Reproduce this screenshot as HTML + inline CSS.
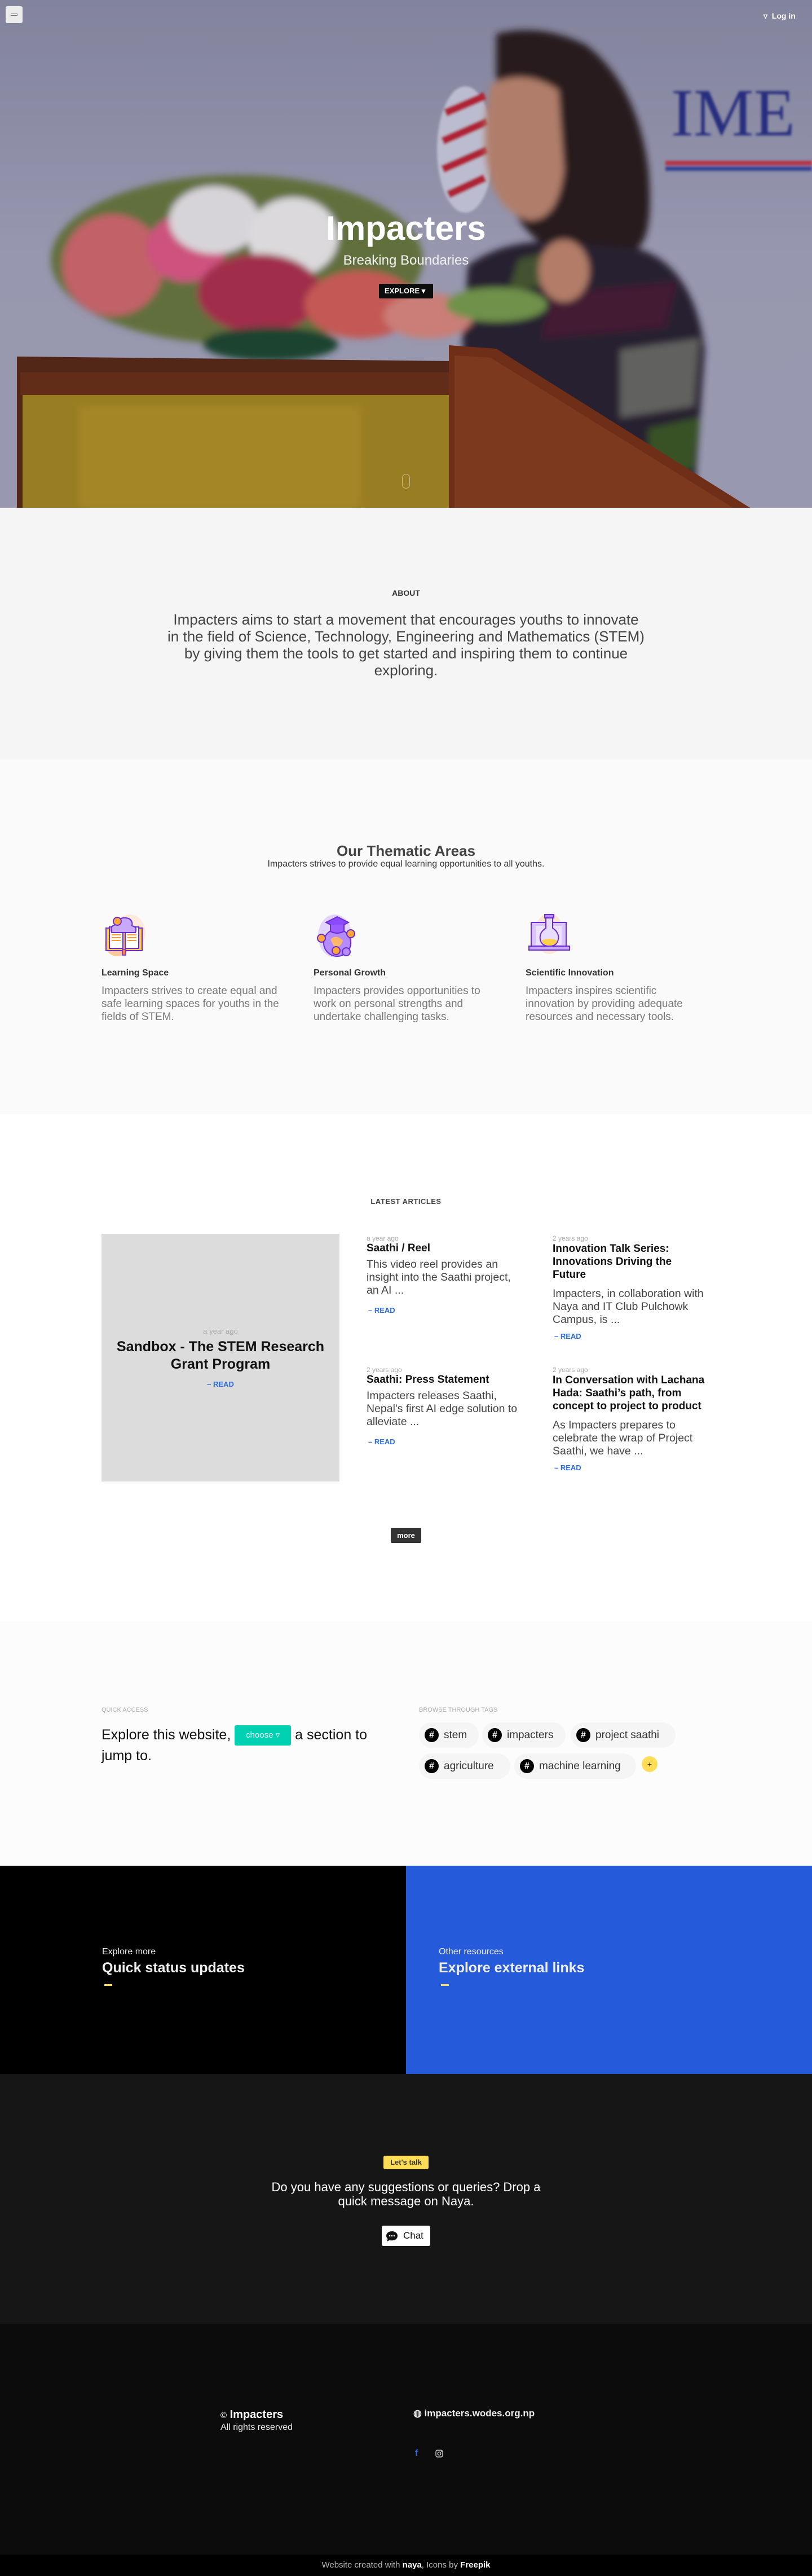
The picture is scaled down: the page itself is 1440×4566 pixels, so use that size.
<!DOCTYPE html>
<html><head><meta charset="utf-8">
<style>
*{margin:0;padding:0;box-sizing:border-box}
body{width:1440px;height:4566px;position:relative;font-family:"Liberation Sans",sans-serif;background:#fff;overflow:hidden}
.a{position:absolute}
.c{text-align:center}
.nw{white-space:nowrap}
</style></head><body>

<!-- HERO -->
<svg class="a" style="left:0;top:0" width="1440" height="900" viewBox="0 0 1440 900">
<defs><filter id="b" x="-20%" y="-20%" width="140%" height="140%"><feGaussianBlur stdDeviation="6"/></filter>
<filter id="b2"><feGaussianBlur stdDeviation="2"/></filter>
<linearGradient id="bg" x1="0" y1="0" x2="0" y2="1"><stop offset="0" stop-color="#8f90aa"/><stop offset=".5" stop-color="#a6a6bf"/><stop offset="1" stop-color="#a8a8c0"/></linearGradient></defs>
<rect width="1440" height="900" fill="url(#bg)"/>
<g filter="url(#b2)">
<ellipse cx="825" cy="265" rx="50" ry="112" fill="#cfd0e2"/>
<path d="M790 200 L860 170 M785 250 L865 215 M785 300 L865 265 M795 345 L860 315" stroke="#c02838" stroke-width="14"/>
<text x="1190" y="240" font-family="Liberation Serif" font-size="120" fill="#2a3088">IME B</text>
<rect x="1180" y="285" width="260" height="8" fill="#c83848"/><rect x="1180" y="295" width="260" height="8" fill="#3a48a0"/>
</g>
<g filter="url(#b)">
<path d="M880 60 Q960 40 1040 80 Q1130 150 1150 300 Q1160 420 1130 440 L1000 450 Q920 430 880 300Z" fill="#2a1e1c"/>
<path d="M870 150 Q930 120 990 160 L1000 300 Q990 390 940 390 Q890 380 870 320 Q850 250 870 150Z" fill="#c28a72"/>
<path d="M830 470 Q900 420 1000 430 L1130 440 Q1230 470 1250 620 L1230 900 L840 900 L820 600Z" fill="#2c2430"/>
<path d="M980 520 L1200 500 L1180 580 L960 600Z" fill="#4a1c34"/>
<path d="M1100 620 L1240 600 L1230 720 L1100 740Z" fill="#6a6a66"/>
<path d="M1150 760 L1240 740 L1230 830 L1150 850Z" fill="#3e5a28"/>
<path d="M920 460 L1000 440 L990 500 L900 520Z" fill="#4a5a30"/>
<ellipse cx="1000" cy="480" rx="45" ry="55" fill="#c48870"/>
<ellipse cx="420" cy="460" rx="330" ry="150" fill="#6a7a40"/>
<ellipse cx="200" cy="470" rx="90" ry="90" fill="#d66a70"/>
<ellipse cx="330" cy="440" rx="70" ry="60" fill="#e25a88"/>
<ellipse cx="380" cy="390" rx="80" ry="60" fill="#eeeaee"/>
<ellipse cx="520" cy="420" rx="80" ry="70" fill="#f2f0f0"/>
<ellipse cx="460" cy="520" rx="110" ry="70" fill="#b03050"/>
<ellipse cx="640" cy="540" rx="100" ry="60" fill="#d8605a"/>
<ellipse cx="760" cy="560" rx="80" ry="40" fill="#e08a80"/>
<ellipse cx="880" cy="540" rx="90" ry="30" fill="#7aa050"/>
<ellipse cx="480" cy="610" rx="120" ry="30" fill="#1e4a30"/>
</g>
<path d="M30 632 L800 640 L800 900 L30 900Z" fill="#5a2a16"/>
<path d="M36 660 L796 660 L796 700 L36 700Z" fill="#6a3018"/>
<rect x="40" y="700" width="756" height="200" fill="#a98a22"/>
<rect x="140" y="720" width="500" height="180" fill="#c09a2c" opacity=".6" filter="url(#b)"/>
<path d="M796 612 L880 618 L1330 900 L796 900Z" fill="#7a3216"/>
<path d="M806 630 L870 634 L1300 900 L806 900Z" fill="#8a3e1c"/>
<rect width="1440" height="900" fill="rgba(20,20,40,.1)"/>
</svg>
<div class="a" style="left:10px;top:11px;width:30px;height:30px;background:#ececec;border-radius:3px"><div class="a" style="left:9px;top:13px;width:12px;height:4px;border:1px solid #777"></div></div>
<div class="a" style="left:1354px;top:20px;color:#fff;font-size:14px;font-weight:bold">▿ &nbsp;Log in</div>
<div class="a c" style="left:0;top:370px;width:1440px;color:#fff;font-size:60px;font-weight:bold">Impacters</div>
<div class="a c" style="left:0;top:448px;width:1440px;color:#f2f2f2;font-size:24px">Breaking Boundaries</div>
<div class="a" style="left:672px;top:503px;width:96px;height:26px;background:#0d0d0d;border-radius:2px;color:#fff;font-size:13px;font-weight:bold;line-height:26px;padding-left:10px">EXPLORE ▾</div>
<div class="a" style="left:713px;top:840px;width:14px;height:26px;border:1.5px solid rgba(255,255,255,.5);border-radius:8px"></div>

<!-- ABOUT -->
<div class="a" style="left:0;top:900px;width:1440px;height:446px;background:#f5f5f5"></div>
<div class="a c" style="left:0;top:1043px;width:1440px;font-size:14px;font-weight:bold;color:#333">ABOUT</div>
<div class="a c nw" style="left:0;top:1083px;width:1440px;font-size:26px;line-height:30px;color:#444">Impacters aims to start a movement that encourages youths to innovate<br>in the field of Science, Technology, Engineering and Mathematics (STEM)<br>by giving them the tools to get started and inspiring them to continue<br>exploring.</div>

<!-- THEMATIC -->
<div class="a" style="left:0;top:1346px;width:1440px;height:629px;background:#fafafa"></div>
<div class="a c" style="left:0;top:1493px;width:1440px;font-size:26px;font-weight:bold;color:#444">Our Thematic Areas</div>
<div class="a c" style="left:0;top:1523px;width:1440px;font-size:16px;color:#333">Impacters strives to provide equal learning opportunities to all youths.</div>

<svg class="a" style="left:180px;top:1615px" width="80" height="82" viewBox="0 0 80 82">
<ellipse cx="28" cy="58" rx="22" ry="22" fill="#fcc89a"/><ellipse cx="50" cy="38" rx="28" ry="32" fill="#fde2cc" opacity=".7"/>
<rect x="8" y="30" width="64" height="40" fill="#ffcf48" stroke="#6a2bd0" stroke-width="2"/>
<rect x="14" y="28" width="24" height="38" fill="#fff" stroke="#6a2bd0" stroke-width="2"/><rect x="42" y="28" width="24" height="38" fill="#fff" stroke="#6a2bd0" stroke-width="2"/>
<g stroke="#ff9a2e" stroke-width="2"><line x1="18" y1="42" x2="34" y2="42"/><line x1="18" y1="47" x2="34" y2="47"/><line x1="18" y1="52" x2="34" y2="52"/><line x1="46" y1="42" x2="62" y2="42"/><line x1="46" y1="47" x2="62" y2="47"/><line x1="46" y1="52" x2="62" y2="52"/></g>
<path d="M18 38 Q14 24 28 24 Q30 10 44 12 Q56 14 54 26 Q64 28 60 38 Z" fill="#c9a8ff" stroke="#6a2bd0" stroke-width="2"/>
<circle cx="28" cy="18" r="7" fill="#ffa53a" stroke="#6a2bd0" stroke-width="2"/><rect x="37" y="68" width="6" height="10" fill="#ff7a3a" stroke="#6a2bd0" stroke-width="1.5"/>
</svg>
<svg class="a" style="left:556px;top:1615px" width="82" height="82" viewBox="0 0 82 82">
<ellipse cx="38" cy="44" rx="30" ry="38" fill="#e3d4ff"/>
<circle cx="42" cy="56" r="24" fill="#b58cff" stroke="#6a2bd0" stroke-width="2"/><path d="M30 50 Q40 40 52 52 Q48 66 36 62Z" fill="#ffb86a"/>
<path d="M22 20 L42 10 L62 20 L42 30Z" fill="#8a4bff" stroke="#6a2bd0" stroke-width="2"/><path d="M30 24 V36 Q42 42 54 36 V24" fill="#9a5cff" stroke="#6a2bd0" stroke-width="2"/>
<circle cx="14" cy="48" r="7" fill="#ffa53a" stroke="#6a2bd0" stroke-width="2"/><circle cx="66" cy="40" r="7" fill="#ffa53a" stroke="#6a2bd0" stroke-width="2"/><circle cx="40" cy="70" r="7" fill="#ffa53a" stroke="#6a2bd0" stroke-width="2"/><circle cx="58" cy="72" r="7" fill="#b58cff" stroke="#6a2bd0" stroke-width="2"/>
</svg>
<svg class="a" style="left:934px;top:1615px" width="82" height="82" viewBox="0 0 82 82">
<ellipse cx="40" cy="40" rx="26" ry="36" fill="#fde2cc" opacity=".8"/>
<rect x="8" y="20" width="62" height="44" fill="#d9c4ff" stroke="#6a2bd0" stroke-width="2"/><rect x="16" y="26" width="46" height="34" fill="#fff" opacity=".5"/>
<rect x="4" y="62" width="72" height="7" fill="#c9a8ff" stroke="#6a2bd0" stroke-width="2"/>
<path d="M34 10 H46 V30 Q58 38 56 50 Q54 62 40 62 Q26 62 24 50 Q22 38 34 30Z" fill="#e8dcff" stroke="#6a2bd0" stroke-width="2"/><path d="M26 52 Q40 46 54 52 Q52 60 40 61 Q28 60 26 52Z" fill="#ffcf48"/>
<rect x="32" y="6" width="16" height="6" fill="#b58cff" stroke="#6a2bd0" stroke-width="2"/>
</svg>

<div class="a" style="left:180px;top:1716px;font-size:16px;font-weight:bold;color:#333">Learning Space</div>
<div class="a" style="left:556px;top:1716px;font-size:16px;font-weight:bold;color:#333">Personal Growth</div>
<div class="a" style="left:932px;top:1716px;font-size:16px;font-weight:bold;color:#333">Scientific Innovation</div>
<div class="a nw" style="left:180px;top:1745px;font-size:19px;line-height:23px;color:#777">Impacters strives to create equal and<br>safe learning spaces for youths in the<br>fields of STEM.</div>
<div class="a nw" style="left:556px;top:1745px;font-size:19px;line-height:23px;color:#777">Impacters provides opportunities to<br>work on personal strengths and<br>undertake challenging tasks.</div>
<div class="a nw" style="left:932px;top:1745px;font-size:19px;line-height:23px;color:#777">Impacters inspires scientific<br>innovation by providing adequate<br>resources and necessary tools.</div>

<!-- ARTICLES -->
<div class="a c" style="left:0;top:2122px;width:1440px;font-size:13px;font-weight:bold;color:#444;letter-spacing:.5px">LATEST ARTICLES</div>
<div class="a" style="left:180px;top:2187px;width:422px;height:439px;background:#dcdcdc"></div>
<div class="a c" style="left:180px;top:2352px;width:422px;font-size:13px;color:#aaa">a year ago</div>
<div class="a c nw" style="left:180px;top:2372px;width:422px;font-size:25px;line-height:31px;font-weight:bold;color:#111">Sandbox - The STEM Research<br>Grant Program</div>
<div class="a c" style="left:180px;top:2446px;width:422px;font-size:13px;font-weight:bold;color:#2a6ce0">– READ</div>

<div class="a" style="left:650px;top:2188px;font-size:12px;color:#aaa">a year ago</div>
<div class="a" style="left:650px;top:2202px;font-size:19px;font-weight:bold;color:#111">Saathi / Reel</div>
<div class="a nw" style="left:650px;top:2230px;font-size:19.5px;line-height:23px;color:#444">This video reel provides an<br>insight into the Saathi project,<br>an AI ...</div>
<div class="a" style="left:653px;top:2315px;font-size:13px;font-weight:bold;color:#2a6ce0">– READ</div>

<div class="a" style="left:980px;top:2188px;font-size:12px;color:#aaa">2 years ago</div>
<div class="a nw" style="left:980px;top:2202px;font-size:19px;line-height:23px;font-weight:bold;color:#111">Innovation Talk Series:<br>Innovations Driving the<br>Future</div>
<div class="a nw" style="left:980px;top:2282px;font-size:19.5px;line-height:23px;color:#444">Impacters, in collaboration with<br>Naya and IT Club Pulchowk<br>Campus, is ...</div>
<div class="a" style="left:983px;top:2361px;font-size:13px;font-weight:bold;color:#2a6ce0">– READ</div>

<div class="a" style="left:650px;top:2421px;font-size:12px;color:#aaa">2 years ago</div>
<div class="a" style="left:650px;top:2435px;font-size:19px;font-weight:bold;color:#111">Saathi: Press Statement</div>
<div class="a nw" style="left:650px;top:2463px;font-size:19.5px;line-height:23px;color:#444">Impacters releases Saathi,<br>Nepal's first AI edge solution to<br>alleviate ...</div>
<div class="a" style="left:653px;top:2548px;font-size:13px;font-weight:bold;color:#2a6ce0">– READ</div>

<div class="a" style="left:980px;top:2421px;font-size:12px;color:#aaa">2 years ago</div>
<div class="a nw" style="left:980px;top:2435px;font-size:19px;line-height:23px;font-weight:bold;color:#111">In Conversation with Lachana<br>Hada: Saathi’s path, from<br>concept to project to product</div>
<div class="a nw" style="left:980px;top:2515px;font-size:19.5px;line-height:23px;color:#444">As Impacters prepares to<br>celebrate the wrap of Project<br>Saathi, we have ...</div>
<div class="a" style="left:983px;top:2594px;font-size:13px;font-weight:bold;color:#2a6ce0">– READ</div>

<div class="a c" style="left:693px;top:2708px;width:54px;height:27px;background:#333;color:#fff;font-size:13px;font-weight:bold;line-height:27px;border-radius:2px">more</div>

<!-- QUICK ACCESS -->
<div class="a" style="left:0;top:2874px;width:1440px;height:433px;background:#fcfcfc"></div>
<div class="a" style="left:180px;top:3025px;font-size:11px;color:#aaa">QUICK ACCESS</div>
<div class="a" style="left:743px;top:3025px;font-size:11px;color:#aaa">BROWSE THROUGH TAGS</div>
<div class="a nw" style="left:180px;top:3057px;font-size:25px;line-height:37px;color:#111">Explore this website, <span style="display:inline-block;background:#00d1b2;color:#fff;font-size:15px;line-height:36px;height:36px;width:100px;text-align:center;border-radius:3px;vertical-align:middle">choose ▿</span> a section to<br>jump to.</div>
<style>.tag{position:absolute;height:45px;background:#f5f5f5;border-radius:23px;font-size:19px;color:#333;line-height:45px;padding-left:44px}.tag:before{content:"#";position:absolute;left:10px;top:10px;width:25px;height:25px;border-radius:50%;background:#000;color:#fff;font-size:16px;font-weight:bold;line-height:25px;text-align:center}</style>
<div class="tag" style="left:743px;top:3053px;width:106px">stem</div>
<div class="tag" style="left:855px;top:3053px;width:148px">impacters</div>
<div class="tag" style="left:1012px;top:3053px;width:186px">project saathi</div>
<div class="tag" style="left:743px;top:3108px;width:162px">agriculture</div>
<div class="tag" style="left:912px;top:3108px;width:216px">machine learning</div>
<div class="a c" style="left:1138px;top:3113px;width:28px;height:28px;border-radius:50%;background:#ffdd57;font-size:14px;line-height:28px;color:#333">+</div>

<!-- SPLIT -->
<div class="a" style="left:0;top:3307px;width:720px;height:369px;background:#000"></div>
<div class="a" style="left:720px;top:3307px;width:720px;height:369px;background:#255bdb"></div>
<div class="a" style="left:181px;top:3451px;font-size:16px;color:#eee">Explore more</div>
<div class="a" style="left:181px;top:3474px;font-size:25px;font-weight:bold;color:#eee">Quick status updates</div>
<div class="a" style="left:185px;top:3517px;width:14px;height:3px;background:#ffdd57"></div>
<div class="a" style="left:778px;top:3451px;font-size:16px;color:#eee">Other resources</div>
<div class="a" style="left:778px;top:3474px;font-size:25px;font-weight:bold;color:#eee">Explore external links</div>
<div class="a" style="left:782px;top:3517px;width:14px;height:3px;background:#ffdd57"></div>

<!-- TALK -->
<div class="a" style="left:0;top:3676px;width:1440px;height:443px;background:#161616"></div>
<div class="a c" style="left:680px;top:3821px;width:80px;height:24px;background:#ffdd57;border-radius:3px;font-size:13px;font-weight:bold;line-height:24px;color:#333">Let's talk</div>
<div class="a c nw" style="left:0;top:3864px;width:1440px;font-size:22px;line-height:25px;color:#fff">Do you have any suggestions or queries? Drop a<br>quick message on Naya.</div>
<div class="a" style="left:677px;top:3945px;width:86px;height:36px;background:#fff;border-radius:3px;font-size:17px;line-height:36px;color:#111;padding-left:38px">Chat</div>
<svg class="a" style="left:684px;top:3954px" width="22" height="20" viewBox="0 0 22 20"><path d="M11 1C5 1 1 4.5 1 9c0 2.2 1 4.1 2.7 5.5L2 19l5-2.3c1.2.4 2.6.6 4 .6 6 0 10-3.6 10-8.2S17 1 11 1z" fill="#111"/><circle cx="7" cy="9" r="1.3" fill="#fff"/><circle cx="11" cy="9" r="1.3" fill="#fff"/><circle cx="15" cy="9" r="1.3" fill="#fff"/></svg>

<!-- FOOTER -->
<div class="a" style="left:0;top:4119px;width:1440px;height:409px;background:#0c0c0c"></div>
<div class="a" style="left:391px;top:4269px;font-size:20px;font-weight:bold;color:#fff"><span style="font-size:15px;font-weight:normal">©</span> Impacters</div>
<div class="a" style="left:391px;top:4294px;font-size:16px;color:#eee">All rights reserved</div>
<div class="a" style="left:733px;top:4268px;font-size:17px;font-weight:bold;color:#eee">◍ impacters.wodes.org.np</div>
<div class="a" style="left:736px;top:4340px;font-size:16px;font-weight:bold;color:#2a6ce0">f</div>
<svg class="a" style="left:772px;top:4342px" width="14" height="14" viewBox="0 0 14 14"><rect x="1" y="1" width="12" height="12" rx="3" fill="none" stroke="#ccc" stroke-width="1.4"/><circle cx="7" cy="7" r="2.8" fill="none" stroke="#ccc" stroke-width="1.4"/><circle cx="10.5" cy="3.5" r=".8" fill="#ccc"/></svg>
<div class="a" style="left:0;top:4528px;width:1440px;height:38px;background:#000"></div>
<div class="a c" style="left:0;top:4538px;width:1440px;font-size:15px;color:#bbb">Website created with <b style="color:#fff">naya</b>, Icons by <b style="color:#fff">Freepik</b></div>
</body></html>
